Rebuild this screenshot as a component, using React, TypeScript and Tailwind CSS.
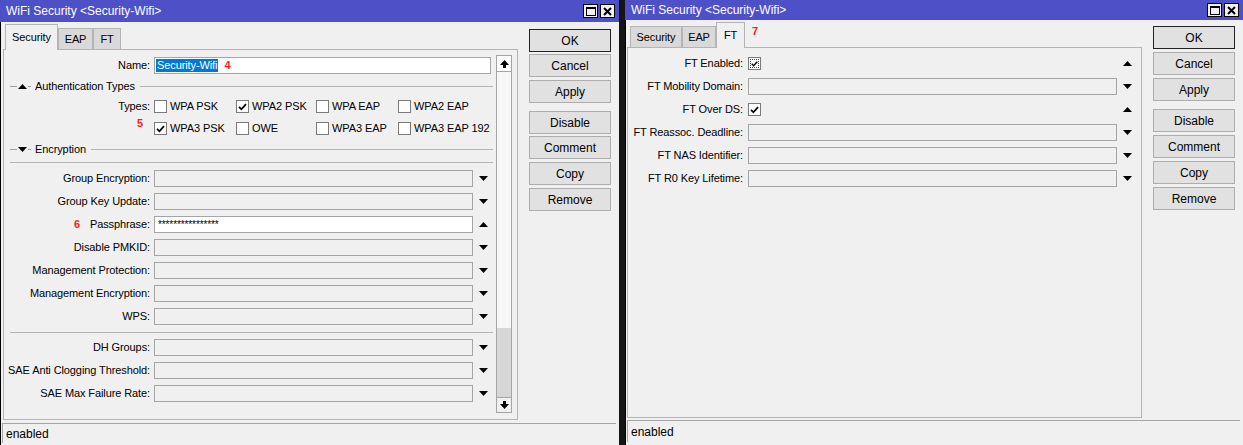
import React from "react";

const Arrow = ({ up }: { up?: boolean }) => (
  <svg width="9" height="5" viewBox="0 0 9 5" className="block">
    <path d={up ? "M4.5 0L9 5H0Z" : "M0 0H9L4.5 5Z"} fill="#000" />
  </svg>
);

const Check = () => (
  <svg width="9" height="8" viewBox="0 0 9 8" className="block">
    <path d="M1 3.8 L3.4 6.3 L8 1.2" stroke="#000" strokeWidth="1.8" fill="none" />
  </svg>
);

const Box = ({ checked, focus }: { checked?: boolean; focus?: boolean }) => (
  <div className="flex h-[13px] w-[13px] shrink-0 items-center justify-center border border-[#7a7a7a] bg-white">
    {focus ? (
      <div className="flex h-[9px] w-[9px] items-center justify-center border border-dotted border-[#444]">
        <Check />
      </div>
    ) : checked ? (
      <Check />
    ) : null}
  </div>
);

const TitleBar = ({ h }: { h: string }) => (
  <div className={`flex ${h} items-center justify-between bg-[#4e50c8] pl-[6px] pr-[4px] text-white`}>
    <span className="text-[12px] tracking-normal">WiFi Security &lt;Security-Wifi&gt;</span>
    <div className="flex gap-[2px]">
      <div className="flex h-[14px] w-[15px] items-center justify-center border border-black bg-[#f0f0f0]">
        <div className="h-[9px] w-[10px] border border-black border-t-2" />
      </div>
      <div className="flex h-[14px] w-[15px] items-center justify-center border border-black bg-[#f0f0f0]">
        <svg width="9" height="9" viewBox="0 0 9 9">
          <path d="M1 1L8 8M8 1L1 8" stroke="#000" strokeWidth="2" />
        </svg>
      </div>
    </div>
  </div>
);

const Btn = ({ label, def, mt }: { label: string; def?: boolean; mt: string }) => (
  <div
    className={`${mt} flex h-[23px] items-center justify-center border ${
      def ? "border-[#222]" : "border-[#adadad]"
    } bg-[#e1e1e1] text-[12px] tracking-normal`}
  >
    {label}
  </div>
);

const LeftButtons = () => (
  <div className="ml-[11px] mt-[7px] flex w-[82px] flex-col">
    <Btn label="OK" def mt="mt-0" />
    <Btn label="Cancel" mt="mt-[2px]" />
    <Btn label="Apply" mt="mt-[3px]" />
    <Btn label="Disable" mt="mt-[8px]" />
    <Btn label="Comment" mt="mt-[2px]" />
    <Btn label="Copy" mt="mt-[3px]" />
    <Btn label="Remove" mt="mt-[3px]" />
  </div>
);

const RightButtons = () => (
  <div className="ml-[11px] mt-[6px] flex w-[82px] flex-col">
    <Btn label="OK" def mt="mt-0" />
    <Btn label="Cancel" mt="mt-[3px]" />
    <Btn label="Apply" mt="mt-[3px]" />
    <Btn label="Disable" mt="mt-[8px]" />
    <Btn label="Comment" mt="mt-[3px]" />
    <Btn label="Copy" mt="mt-[3px]" />
    <Btn label="Remove" mt="mt-[3px]" />
  </div>
);

const Tab = ({ label, active, w }: { label: string; active?: boolean; w: string }) =>
  active ? (
    <div
      className={`relative z-10 mb-[-1px] flex h-[26px] ${w} items-center justify-center border border-b-0 border-[#b4b4b4] bg-[#f0f0f0]`}
    >
      {label}
    </div>
  ) : (
    <div
      className={`flex h-[21px] ${w} items-center justify-center border border-b-0 border-[#b4b4b4] bg-[#d9d9d9]`}
    >
      {label}
    </div>
  );

const Field = ({
  label,
  white,
  up,
  pre,
  value,
}: {
  label: string;
  white?: boolean;
  up?: boolean;
  pre?: React.ReactNode;
  value?: string;
}) => (
  <div className="flex h-[23px] items-center">
    <div className="flex w-[150px] items-center justify-end pr-[4px]">
      {pre}
      <span>{label}</span>
    </div>
    <div
      className={`flex h-[17px] w-[319px] items-center border border-[#a5a5a5] ${
        white ? "bg-white" : "bg-[#f0f0f0]"
      } pl-[3px] text-[10px] leading-none`}
    >
      {value}
    </div>
    <div className="flex w-[20px] justify-center">
      <Arrow up={up} />
    </div>
  </div>
);

const RField = ({ label, up }: { label: string; up?: boolean }) => (
  <div className="flex h-[23px] items-center">
    <div className="w-[120px] pr-[5px] text-right">{label}</div>
    <div className="h-[17px] w-[369px] border border-[#a5a5a5] bg-[#f0f0f0]" />
    <div className="flex w-[20px] justify-center">
      <Arrow up={up} />
    </div>
  </div>
);

const Section = ({ title, up }: { title: string; up?: boolean }) => (
  <div className="flex items-center pl-[6px] pr-[3px]">
    <div className="h-px w-[7px] bg-[#a0a0a0]" />
    <div className="ml-[1px]">
      <Arrow up={up} />
    </div>
    <div className="ml-[1px] h-px w-[3px] bg-[#a0a0a0]" />
    <span className="ml-[4px]">{title}</span>
    <div className="ml-[5px] h-px flex-1 bg-[#b4b4b4]" />
  </div>
);

const Sep = () => <div className="ml-[6px] mr-[3px] h-px bg-[#b4b4b4]" />;

const TypeCell = ({ label, checked, w }: { label: string; checked?: boolean; w: string }) => (
  <div className={`flex ${w} items-center gap-[3px]`}>
    <Box checked={checked} />
    <span>{label}</span>
  </div>
);

const Scrollbar = () => (
  <div className="mt-[5px] flex h-[358px] w-[16px] flex-col border border-[#a5a5a5] bg-[#f7f7f7]">
    <div className="flex h-[16px] items-center justify-center border-b border-[#a5a5a5] bg-white">
      <svg width="9" height="8" viewBox="0 0 9 8">
        <path d="M4.5 0L9 5H6V8H3V5H0Z" fill="#000" />
      </svg>
    </div>
    <div className="flex-1" />
    <div className="h-[69px] bg-[#d6d6d6]" />
    <div className="flex h-[15px] items-center justify-center border-t border-[#a5a5a5] bg-[#f0f0f0]">
      <svg width="9" height="8" viewBox="0 0 9 8">
        <path d="M3 0H6V3H9L4.5 8L0 3H3Z" fill="#000" />
      </svg>
    </div>
  </div>
);

export default function App() {
  return (
    <div
      className="flex h-[445px] w-[1243px] overflow-hidden bg-[#151515] text-[11px] tracking-[-0.1px] text-black"
      style={{ fontFamily: '"Liberation Sans", Arial, sans-serif' }}
    >
      {/* Left window */}
      <div className="flex h-[445px] w-[619px] flex-col bg-[#f0f0f0]">
        <TitleBar h="h-[22px]" />
        <div className="flex flex-1 flex-col border-l border-black">
          <div className="flex">
            <div className="flex flex-col pl-[2px]">
              <div className="flex h-[27px] items-end pl-[2px]">
                <Tab label="Security" active w="w-[53px]" />
                <Tab label="EAP" w="w-[35px]" />
                <Tab label="FT" w="w-[28px]" />
              </div>
              <div className="flex h-[371px] w-[515px] border border-[#b4b4b4] bg-[#f0f0f0]">
                <div className="flex w-[492px] flex-col pt-[4px]">
                  <div className="flex h-[23px] items-center">
                    <div className="w-[150px] pr-[4px] text-right">Name:</div>
                    <div className="flex h-[17px] w-[337px] items-center border border-[#a5a5a5] bg-white pl-[1px]">
                      <span className="bg-[#0078d7] px-[1px] leading-[13px] text-white">Security-Wifi</span>
                      <span className="ml-[6px] text-[11px] font-bold text-[#ff1a1a]">4</span>
                    </div>
                  </div>
                  <div className="flex h-[19px] items-center">
                    <div className="w-full">
                      <Section title="Authentication Types" up />
                    </div>
                  </div>
                  <div className="flex h-[21px] items-center">
                    <div className="w-[150px] pr-[4px] text-right">Types:</div>
                    <TypeCell label="WPA PSK" w="w-[82px]" />
                    <TypeCell label="WPA2 PSK" checked w="w-[80px]" />
                    <TypeCell label="WPA EAP" w="w-[82px]" />
                    <TypeCell label="WPA2 EAP" w="w-[90px]" />
                  </div>
                  <div className="flex h-[23px] items-center">
                    <div className="w-[150px] pr-[11px] text-right">
                      <span className="relative -top-[5px] font-bold text-[#ff1a1a]">5</span>
                    </div>
                    <TypeCell label="WPA3 PSK" checked w="w-[82px]" />
                    <TypeCell label="OWE" w="w-[80px]" />
                    <TypeCell label="WPA3 EAP" w="w-[82px]" />
                    <TypeCell label="WPA3 EAP 192" w="w-[96px]" />
                  </div>
                  <div className="flex h-[18px] items-center">
                    <div className="w-full">
                      <Section title="Encryption" />
                    </div>
                  </div>
                  <div className="flex h-[9px] flex-col justify-center">
                    <Sep />
                  </div>
                  <Field label="Group Encryption:" />
                  <Field label="Group Key Update:" />
                  <Field
                    label="Passphrase:"
                    white
                    up
                    value="****************"
                    pre={<span className="mr-[10px] font-bold text-[#ff1a1a]">6</span>}
                  />
                  <Field label="Disable PMKID:" />
                  <Field label="Management Protection:" />
                  <Field label="Management Encryption:" />
                  <Field label="WPS:" />
                  <div className="flex h-[8px] flex-col justify-center">
                    <Sep />
                  </div>
                  <Field label="DH Groups:" />
                  <Field label="SAE Anti Clogging Threshold:" />
                  <Field label="SAE Max Failure Rate:" />
                </div>
                <Scrollbar />
              </div>
            </div>
            <LeftButtons />
          </div>
          <div className="ml-[1px] mt-[3px] flex h-[20px] w-[614px] items-center border-l border-t border-[#a5a5a5] pl-[3px] text-[12px] tracking-normal">
            enabled
          </div>
        </div>
      </div>

      {/* Right window */}
      <div className="ml-[6px] flex h-[445px] w-[618px] flex-col bg-[#f0f0f0]">
        <TitleBar h="h-[20px]" />
        <div className="flex flex-1 flex-col border-l border-black">
          <div className="flex">
            <div className="flex flex-col pl-[1px]">
              <div className="flex h-[27px] items-end pl-[3px]">
                <Tab label="Security" w="w-[52px]" />
                <Tab label="EAP" w="w-[34px]" />
                <Tab label="FT" active w="w-[29px]" />
                <span className="mb-[8px] ml-[7px] font-bold text-[#ff1a1a]">7</span>
              </div>
              <div className="flex h-[371px] w-[515px] flex-col border border-[#b4b4b4] bg-[#f0f0f0] pt-[4px]">
                <div className="flex h-[23px] items-center">
                  <div className="w-[120px] pr-[5px] text-right">FT Enabled:</div>
                  <div className="w-[369px]">
                    <Box checked focus />
                  </div>
                  <div className="flex w-[20px] justify-center">
                    <Arrow up />
                  </div>
                </div>
                <RField label="FT Mobility Domain:" />
                <div className="flex h-[23px] items-center">
                  <div className="w-[120px] pr-[5px] text-right">FT Over DS:</div>
                  <div className="w-[369px]">
                    <Box checked />
                  </div>
                  <div className="flex w-[20px] justify-center">
                    <Arrow up />
                  </div>
                </div>
                <RField label="FT Reassoc. Deadline:" />
                <RField label="FT NAS Identifier:" />
                <RField label="FT R0 Key Lifetime:" />
              </div>
            </div>
            <RightButtons />
          </div>
          <div className="ml-[1px] mt-[2px] flex h-[22px] w-[613px] items-center border-l border-t border-[#a5a5a5] pl-[3px] text-[12px] tracking-normal">
            enabled
          </div>
        </div>
      </div>
    </div>
  );
}
